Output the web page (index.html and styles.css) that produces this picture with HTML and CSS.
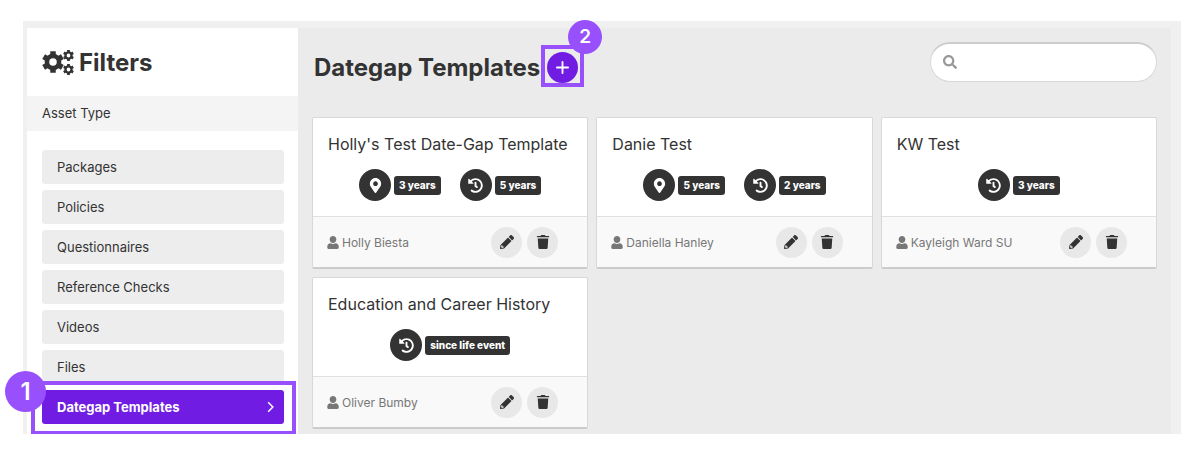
FILE: index.html
```
<!DOCTYPE html>
<html lang="en">

<head>
    <meta charset="UTF-8">
    <meta name="viewport" content="width=device-width, initial-scale=1.0">
    <title>Dategap Templates</title>
    <link rel="stylesheet" href="styles.css">
</head>

<body>

    <!-- shared icons -->
    <svg class="sprite" aria-hidden="true">
        <symbol id="pin" viewBox="0 0 384 512">
            <path d="M172.268 501.67C26.97 291.031 0 269.413 0 192 0 85.961 85.961 0 192 0s192 85.961 192 192c0 77.413-26.97 99.031-172.268 309.67-9.535 13.774-29.93 13.773-39.464 0zM192 272c44.183 0 80-35.817 80-80s-35.817-80-80-80-80 35.817-80 80 35.817 80 80 80z" />
        </symbol>
        <symbol id="history" viewBox="0 0 512 512">
            <path d="M504 255.531c.253 136.64-111.18 248.372-247.82 248.468-59.015.042-113.223-20.53-155.822-54.911-11.077-8.94-11.905-25.541-1.839-35.607l11.267-11.267c8.609-8.609 22.353-9.551 31.891-1.984C173.062 425.135 212.781 440 256 440c101.705 0 184-82.311 184-184 0-101.705-82.311-184-184-184-48.814 0-93.149 18.969-126.068 49.932l50.754 50.754c10.08 10.08 2.941 27.314-11.313 27.314H24c-8.837 0-16-7.163-16-16V38.627c0-14.254 17.234-21.393 27.314-11.314l49.372 49.372C129.209 34.136 189.552 8 256 8c136.81 0 247.747 110.78 248 247.531zm-180.912 78.784l9.823-12.63c8.138-10.463 6.253-25.542-4.21-33.679L288 256.349V152c0-13.255-10.745-24-24-24h-16c-13.255 0-24 10.745-24 24v135.651l65.409 50.874c10.463 8.137 25.541 6.253 33.679-4.21z" />
        </symbol>
        <symbol id="user" viewBox="0 0 448 512">
            <path d="M224 272c75 0 132-60 132-136S299 0 224 0 92 60 92 136s57 136 132 136zm100 12c-28 20-62 32-100 32s-72-12-100-32C50 292 0 340 0 410v54c0 26.500 21.500 48 48 48h352c26.500 0 48-21.500 48-48v-54c0-70-50-118-124-126z" />
        </symbol>
        <symbol id="pencil" viewBox="0 0 512 512">
            <path d="M497.9 142.1l-46.1 46.1c-4.7 4.7-12.3 4.7-17 0l-111-111c-4.7-4.7-4.7-12.3 0-17l46.1-46.1c18.7-18.7 49.1-18.7 67.9 0l60.1 60.1c18.8 18.7 18.8 49.1 0 67.9zM284.2 99.8L21.6 362.4.4 483.9c-2.9 16.4 11.4 30.6 27.8 27.8l121.5-21.3 262.6-262.6c4.7-4.7 4.7-12.3 0-17l-111-111c-4.8-4.7-12.4-4.7-17.1 0zM88 424h48v36.3l-64.5 11.3-31.1-31.1L51.7 376H88v48z" />
        </symbol>
        <symbol id="trash" viewBox="0 0 448 512">
            <path d="M432 32H312l-9.4-18.7A24 24 0 0 0 281.1 0H166.8a23.72 23.72 0 0 0-21.4 13.3L136 32H16A16 16 0 0 0 0 48v16a16 16 0 0 0 16 16h416a16 16 0 0 0 16-16V48a16 16 0 0 0-16-16zM53.2 467a48 48 0 0 0 47.9 45h245.8a48 48 0 0 0 47.9-45L416 124H32z" />
        </symbol>
        <symbol id="search" viewBox="0 0 512 512">
            <path d="M505 442.7L405.3 343c-4.5-4.5-10.6-7-17-7H372c27.6-35.3 44-79.7 44-128C416 93.1 322.9 0 208 0S0 93.1 0 208s93.1 208 208 208c48.3 0 92.7-16.4 128-44v16.3c0 6.4 2.5 12.5 7 17l99.7 99.7c9.4 9.4 24.6 9.4 33.9 0l28.3-28.3c9.4-9.4 9.4-24.6.1-34zM208 336c-70.7 0-128-57.2-128-128 0-70.7 57.2-128 128-128 70.7 0 128 57.2 128 128 0 70.7-57.2 128-128 128z" />
        </symbol>
        <symbol id="gear" viewBox="-12 -12 24 24">
            <circle r="6.6" fill="none" stroke="currentColor" stroke-width="5" />
            <g stroke="currentColor" stroke-width="6" stroke-linejoin="round">
                <path d="M0 -11.8V-7M0 11.8V7" />
                <path d="M0 -11.8V-7M0 11.8V7" transform="rotate(60)" />
                <path d="M0 -11.8V-7M0 11.8V7" transform="rotate(120)" />
            </g>
        </symbol>
    </svg>

    <div class="app">
        <aside class="sidebar">
            <h2>
                <svg class="gears" viewBox="0 0 32 26" aria-hidden="true">
                    <use href="#gear" x="0" y="2" width="22" height="22" />
                    <use href="#gear" x="21" y="1" width="11" height="11" />
                    <use href="#gear" x="21" y="15" width="11" height="11" />
                </svg>
                Filters
            </h2>
            <h3>Asset Type</h3>
            <nav class="types">
                <a href="#">Packages</a>
                <a href="#">Policies</a>
                <a href="#">Questionnaires</a>
                <a href="#">Reference Checks</a>
                <a href="#">Videos</a>
                <a href="#">Files</a>
                <a href="#" class="active">Dategap Templates
                    <svg class="chevron" viewBox="0 0 6 10" aria-hidden="true">
                        <path d="M1 1l4 4-4 4" />
                    </svg>
                    <span class="step step-one">1</span>
                </a>
            </nav>
        </aside>

        <main class="content">
            <header class="top">
                <h1>Dategap Templates</h1>
                <div class="add-wrap">
                    <button class="add" aria-label="Add template">
                        <svg viewBox="0 0 14 14" aria-hidden="true">
                            <path d="M7 1v12M1 7h12" />
                        </svg>
                    </button>
                    <span class="step step-two">2</span>
                </div>
                <label class="search">
                    <svg aria-hidden="true"><use href="#search" /></svg>
                    <input type="text" aria-label="Search">
                </label>
            </header>

            <div class="cards">
                <article class="card">
                    <div class="card-body">
                        <h4>Holly's Test Date-Gap Template</h4>
                        <div class="gaps">
                            <div class="gap"><span class="round"><svg aria-hidden="true"><use href="#pin" /></svg></span><span class="tag">3 years</span></div>
                            <div class="gap"><span class="round"><svg aria-hidden="true"><use href="#history" /></svg></span><span class="tag">5 years</span></div>
                        </div>
                    </div>
                    <footer>
                        <svg class="user" aria-hidden="true"><use href="#user" /></svg>
                        <span class="owner">Holly Biesta</span>
                        <button aria-label="Edit"><svg aria-hidden="true"><use href="#pencil" /></svg></button>
                        <button aria-label="Delete"><svg aria-hidden="true"><use href="#trash" /></svg></button>
                    </footer>
                </article>

                <article class="card">
                    <div class="card-body">
                        <h4>Danie Test</h4>
                        <div class="gaps">
                            <div class="gap"><span class="round"><svg aria-hidden="true"><use href="#pin" /></svg></span><span class="tag">5 years</span></div>
                            <div class="gap"><span class="round"><svg aria-hidden="true"><use href="#history" /></svg></span><span class="tag">2 years</span></div>
                        </div>
                    </div>
                    <footer>
                        <svg class="user" aria-hidden="true"><use href="#user" /></svg>
                        <span class="owner">Daniella Hanley</span>
                        <button aria-label="Edit"><svg aria-hidden="true"><use href="#pencil" /></svg></button>
                        <button aria-label="Delete"><svg aria-hidden="true"><use href="#trash" /></svg></button>
                    </footer>
                </article>

                <article class="card">
                    <div class="card-body">
                        <h4>KW Test</h4>
                        <div class="gaps">
                            <div class="gap"><span class="round"><svg aria-hidden="true"><use href="#history" /></svg></span><span class="tag">3 years</span></div>
                        </div>
                    </div>
                    <footer>
                        <svg class="user" aria-hidden="true"><use href="#user" /></svg>
                        <span class="owner">Kayleigh Ward SU</span>
                        <button aria-label="Edit"><svg aria-hidden="true"><use href="#pencil" /></svg></button>
                        <button aria-label="Delete"><svg aria-hidden="true"><use href="#trash" /></svg></button>
                    </footer>
                </article>

                <article class="card">
                    <div class="card-body">
                        <h4>Education and Career History</h4>
                        <div class="gaps">
                            <div class="gap"><span class="round"><svg aria-hidden="true"><use href="#history" /></svg></span><span class="tag">since life event</span></div>
                        </div>
                    </div>
                    <footer>
                        <svg class="user" aria-hidden="true"><use href="#user" /></svg>
                        <span class="owner">Oliver Bumby</span>
                        <button aria-label="Edit"><svg aria-hidden="true"><use href="#pencil" /></svg></button>
                        <button aria-label="Delete"><svg aria-hidden="true"><use href="#trash" /></svg></button>
                    </footer>
                </article>
            </div>
        </main>
    </div>

</body>

</html>
```

FILE: styles.css
```
* {
    box-sizing: border-box;
}

body {
    margin: 0;
    padding: 21px 10px 0 23px;
    background-color: white;
    color: #333;
    font-family: Inter, "Liberation Sans", sans-serif;
    font-size: 13px;
}

h1,
h2,
h3,
h4 {
    margin: 0;
}

svg {
    display: block;
    fill: currentColor;
}

.sprite {
    position: absolute;
    width: 0;
    height: 0;
}

.app {
    display: flex;
    padding: 7px 10px 0 4px;
    background-color: #f0f0f0;
}

.sidebar {
    width: 271px;
    flex-shrink: 0;
    background-color: white;
}

.sidebar h2 {
    display: flex;
    align-items: center;
    gap: 5px;
    height: 68px;
    padding: 0 15px;
    font-size: 24px;
}

.gears {
    width: 32px;
    height: 26px;
}

.sidebar h3 {
    padding: 0 15px;
    background-color: #f4f4f4;
    font-size: 13px;
    font-weight: 400;
    line-height: 35px;
}

.types {
    display: flex;
    flex-direction: column;
    gap: 6px;
    padding: 19px 14px 9px 15px;
}

.types a {
    height: 34px;
    padding: 0 15px;
    border-radius: 3px;
    background-color: #ededed;
    color: #333;
    line-height: 34px;
    text-decoration: none;
}

.types .active {
    position: relative;
    display: flex;
    align-items: center;
    justify-content: space-between;
    padding-right: 10px;
    background-color: #711ce3;
    color: white;
    font-weight: 700;
}

/* frames and numbers of the guided steps */
.types .active::after,
.add-wrap::after {
    content: "";
    position: absolute;
    border: 4px solid #9850fc;
}

.types .active::after {
    inset: -9px -12px -11px -11px;
}

.add-wrap::after {
    inset: -7px -6px -4px;
    pointer-events: none;
}

.step {
    position: absolute;
    z-index: 1;
    border-radius: 50%;
    background-color: #9850fc;
    color: white;
    text-align: center;
    font-weight: 600;
}

.step-one {
    left: -37px;
    top: -19px;
    width: 41px;
    font-size: 24px;
    line-height: 41px;
}

.step-two {
    left: 21px;
    top: -32px;
    width: 34px;
    font-size: 19px;
    line-height: 34px;
}

.chevron {
    width: 7px;
    height: 12px;
    fill: none;
    stroke: white;
    stroke-width: 1.3;
}

.content {
    flex: 1;
    padding: 14px 14px 5px;
    background-color: #ebebeb;
}

.top {
    display: flex;
    align-items: flex-start;
    height: 75px;
}

.top h1 {
    padding: 10px 7px 0 2px;
    font-size: 24px;
    line-height: 32px;
}

.add-wrap {
    position: relative;
    margin-top: 10px;
}

.add {
    display: flex;
    align-items: center;
    justify-content: center;
    width: 31px;
    height: 31px;
    padding: 0;
    border: none;
    border-radius: 50%;
    background-color: #711ce3;
    cursor: pointer;
}

.add svg {
    width: 13px;
    height: 13px;
    stroke: white;
    stroke-width: 2;
    stroke-linecap: round;
}

.search {
    display: flex;
    align-items: center;
    gap: 8px;
    width: 227px;
    height: 40px;
    margin-left: auto;
    padding: 0 12px 2px;
    border: 1px solid #d8d8d8;
    border-top: 2px solid #ccc;
    border-radius: 20px;
    background-color: white;
}

.search svg {
    width: 14px;
    height: 14px;
    color: #999;
}

.search input {
    flex: 1;
    min-width: 0;
    border: none;
    outline: none;
    background: none;
    font: inherit;
}

.cards {
    display: grid;
    grid-template-columns: repeat(3, 1fr);
    gap: 8px;
}

.card {
    border: 1px solid #d8d8d8;
    border-bottom: 2px solid #ccc;
    border-radius: 2px;
    background-color: white;
}

.card-body {
    padding: 14px 15px 15px;
}

.card h4 {
    font-size: 16px;
    font-weight: 400;
    line-height: 24px;
}

.gaps {
    display: flex;
    justify-content: center;
    gap: 19px;
    margin-top: 13px;
}

.gap {
    display: flex;
    align-items: center;
    gap: 3px;
}

.round {
    display: flex;
    align-items: center;
    justify-content: center;
    width: 32px;
    height: 32px;
    border-radius: 50%;
    background-color: #333;
    color: white;
}

.round svg {
    width: 15px;
    height: 15px;
}

.tag {
    padding: 0 5px;
    border-radius: 3px;
    background-color: #333;
    color: white;
    font-size: 10px;
    font-weight: 800;
    line-height: 19px;
}

.card footer {
    display: flex;
    align-items: center;
    gap: 5px;
    height: 51px;
    padding: 0 29px 0 14px;
    border-top: 1px solid #e0e0e0;
    background-color: #f9f9f9;
    color: #777;
    font-size: 12px;
}

.user {
    width: 12px;
    height: 13px;
}

.owner {
    flex: 1;
    margin-left: -2px;
}

.card button {
    display: flex;
    align-items: center;
    justify-content: center;
    width: 31px;
    height: 31px;
    padding: 0;
    border: none;
    border-radius: 50%;
    background-color: #e8e8e8;
    color: #333;
    cursor: pointer;
}

.card button svg {
    width: 14px;
    height: 14px;
}
```
